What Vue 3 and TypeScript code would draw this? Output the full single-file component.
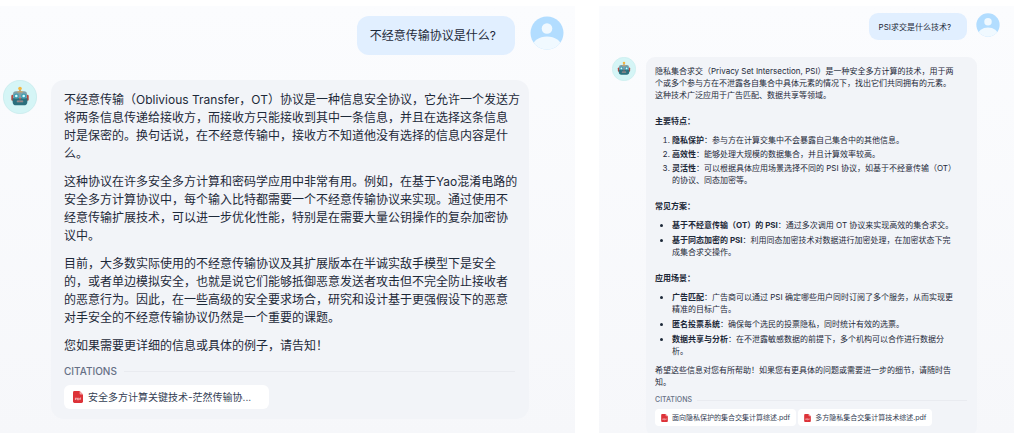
<script setup lang="ts">
interface Item {
  term: string
  text: string
}

interface Block {
  kind: 'p' | 'h' | 'ol' | 'ul'
  text?: string
  items?: Item[]
}

interface Chat {
  id: string
  size: 'regular' | 'compact'
  question: string
  blocks: Block[]
  citations: string[]
}

const chats: Chat[] = [
  {
    id: 'ot',
    size: 'regular',
    question: '不经意传输协议是什么?',
    blocks: [
      {
        kind: 'p',
        text: '不经意传输（Oblivious Transfer，OT）协议是一种信息安全协议，它允许一个发送方\n将两条信息传递给接收方，而接收方只能接收到其中一条信息，并且在选择这条信息\n时是保密的。换句话说，在不经意传输中，接收方不知道他没有选择的信息内容是什\n么。',
      },
      {
        kind: 'p',
        text: '这种协议在许多安全多方计算和密码学应用中非常有用。例如，在基于Yao混淆电路的\n安全多方计算协议中，每个输入比特都需要一个不经意传输协议来实现。通过使用不\n经意传输扩展技术，可以进一步优化性能，特别是在需要大量公钥操作的复杂加密协\n议中。',
      },
      {
        kind: 'p',
        text: '目前，大多数实际使用的不经意传输协议及其扩展版本在半诚实敌手模型下是安全\n的，或者单边模拟安全，也就是说它们能够抵御恶意发送者攻击但不完全防止接收者\n的恶意行为。因此，在一些高级的安全要求场合，研究和设计基于更强假设下的恶意\n对手安全的不经意传输协议仍然是一个重要的课题。',
      },
      { kind: 'p', text: '您如果需要更详细的信息或具体的例子，请告知！' },
    ],
    citations: ['安全多方计算关键技术-茫然传输协...'],
  },
  {
    id: 'psi',
    size: 'compact',
    question: 'PSI求交是什么技术?',
    blocks: [
      {
        kind: 'p',
        text: '隐私集合求交（Privacy Set Intersection, PSI）是一种安全多方计算的技术，用于两个或多个参与方在不泄露各自集合中具体元素的情况下，找出它们共同拥有的元素。这种技术广泛应用于广告匹配、数据共享等领域。',
      },
      { kind: 'h', text: '主要特点：' },
      {
        kind: 'ol',
        items: [
          { term: '隐私保护', text: '：参与方在计算交集中不会暴露自己集合中的其他信息。' },
          { term: '高效性', text: '：能够处理大规模的数据集合，并且计算效率较高。' },
          { term: '灵活性', text: '：可以根据具体应用场景选择不同的 PSI 协议，如基于不经意传输（OT）的协议、同态加密等。' },
        ],
      },
      { kind: 'h', text: '常见方案：' },
      {
        kind: 'ul',
        items: [
          { term: '基于不经意传输（OT）的 PSI', text: '：通过多次调用 OT 协议来实现高效的集合求交。' },
          { term: '基于同态加密的 PSI', text: '：利用同态加密技术对数据进行加密处理，在加密状态下完成集合求交操作。' },
        ],
      },
      { kind: 'h', text: '应用场景：' },
      {
        kind: 'ul',
        items: [
          { term: '广告匹配', text: '：广告商可以通过 PSI 确定哪些用户同时订阅了多个服务，从而实现更精准的目标广告。' },
          { term: '匿名投票系统', text: '：确保每个选民的投票隐私，同时统计有效的选票。' },
          { term: '数据共享与分析', text: '：在不泄露敏感数据的前提下，多个机构可以合作进行数据分析。' },
        ],
      },
      { kind: 'p', text: '希望这些信息对您有所帮助！如果您有更具体的问题或需要进一步的细节，请随时告知。' },
    ],
    citations: ['面向隐私保护的集合交集计算综述.pdf', '多方隐私集合交集计算技术综述.pdf'],
  },
]
</script>

<template>
  <main class="page">
    <section v-for="chat in chats" :key="chat.id" class="chat" :class="chat.size">
      <div class="question">
        <p class="ask">{{ chat.question }}</p>
        <svg class="avatar" viewBox="0 0 34 34" aria-hidden="true">
          <clipPath :id="'face-' + chat.id"><circle cx="17" cy="17" r="16.5" /></clipPath>
          <g :clip-path="'url(#face-' + chat.id + ')'">
            <rect width="34" height="34" fill="#b2ddff" />
            <circle cx="17" cy="12.500" r="5.300" fill="#f0f9ff" />
            <ellipse cx="17" cy="31" rx="14.500" ry="10.500" fill="#f0f9ff" />
          </g>
        </svg>
      </div>

      <div class="answer">
        <svg class="avatar" viewBox="0 0 34 34" aria-hidden="true">
          <circle cx="17" cy="17" r="16.600" fill="#d5f5f6" stroke="#c6ebec" stroke-width="0.800" />
          <rect x="16.200" y="8.500" width="1.600" height="4" fill="#8b9297" />
          <circle cx="17" cy="8.600" r="1.800" fill="#f3b63f" />
          <rect x="8.300" y="14.800" width="2.400" height="6" rx="1.200" fill="#b8483f" />
          <rect x="23.300" y="14.800" width="2.400" height="6" rx="1.200" fill="#b8483f" />
          <path d="M13 11.200h8c2 0 3 1.200 3 3v4.800H10v-4.800c0-1.800 1-3 3-3z" fill="#7f9fa8" />
          <path d="M9.600 18.200h14.800v3.200c0 2.600-1.300 3.900-3.700 3.900h-7.400c-2.400 0-3.700-1.300-3.700-3.900z" fill="#2b6f7d" />
          <path d="M14.500 11.200h5v1.200h-5z" fill="#d9a55a" />
          <circle cx="13.300" cy="16" r="2.600" fill="#3d9fb3" />
          <circle cx="20.700" cy="16" r="2.600" fill="#3d9fb3" />
          <circle cx="13.300" cy="16" r="1.300" fill="#d9fbff" />
          <circle cx="20.700" cy="16" r="1.300" fill="#d9fbff" />
          <path d="M17 17.200l1.200 2h-2.400z" fill="#d9544c" />
          <rect x="13.800" y="20.600" width="6.400" height="1.600" rx="0.500" fill="#94a5a9" />
          <path d="M15 20.600v1.600M16.400 20.600v1.600M17.800 20.600v1.600M19.200 20.600v1.600" stroke="#a4504d" stroke-width="0.600" />
        </svg>

        <article class="reply">
          <div class="text">
            <template v-for="(block, i) in chat.blocks" :key="i">
              <p v-if="block.kind === 'p'">{{ block.text }}</p>
              <h3 v-else-if="block.kind === 'h'">{{ block.text }}</h3>
              <component :is="block.kind" v-else>
                <li v-for="item in block.items" :key="item.term"><strong>{{ item.term }}</strong>{{ item.text }}</li>
              </component>
            </template>
          </div>

          <div class="divider">
            <h4>CITATIONS</h4>
            <span class="rule"></span>
          </div>
          <div class="files">
            <a v-for="file in chat.citations" :key="file" class="file" href="#">
              <svg class="pdf" viewBox="0 0 10 12" aria-hidden="true">
                <path d="M1.400 0H6.600L10 3.400V10.600Q10 12 8.600 12H1.400Q0 12 0 10.600V1.400Q0 0 1.400 0z" fill="#dd3238" />
                <path d="M6.600 0L10 3.400H7.600Q6.600 3.400 6.600 2.400z" fill="#f3a3a5" />
                <path d="M2.400 9V7h.8q.6 0 .6.600t-.6.600h-.8M4.600 7v2h.5q.8 0 .8-1t-.8-1zM6.900 9V7h1.200M6.900 8h1" fill="none" stroke="#fff" stroke-width="0.500" />
              </svg>
              <span>{{ file }}</span>
            </a>
          </div>
        </article>
      </div>
    </section>
  </main>
</template>

<style>
body {
  margin: 0;
  background: #fff;
}
</style>

<style scoped>
.page {
  box-sizing: border-box;
  height: 100vh;
  padding-top: 6px;
  display: grid;
  grid-template-columns: 575fr 415fr;
  gap: 24px;
  overflow: hidden;
  color: #1d2939;
  font-family: Inter, "Noto Sans CJK SC", sans-serif;
}

p,
h3,
h4,
ol,
ul {
  margin: 0;
}

.chat {
  min-width: 0;
  background: linear-gradient(#fbfcfe, #f6f7fa);
}

.question,
.answer {
  display: flex;
  align-items: flex-start;
}

.question {
  justify-content: flex-end;
}

.ask {
  background: #e1efff;
}

.avatar {
  flex: none;
  display: block;
}

.reply {
  flex: 1;
  min-width: 0;
  background: #f2f4f8;
}

.text {
  white-space: pre-line;
}

.text h3 {
  font-size: inherit;
  font-weight: 700;
}

strong {
  font-weight: 700;
}

.divider {
  display: flex;
  align-items: center;
}

.divider h4 {
  color: #667085;
  font-weight: 500;
}

.rule {
  flex: 1;
  height: 1px;
  background: #e9ebf0;
}

.files {
  display: flex;
}

.file {
  display: flex;
  align-items: center;
  background: #fff;
  color: #344054;
  text-decoration: none;
  white-space: nowrap;
}

/* Regular size */
.regular {
  font-size: 12px;
  line-height: 18px;
}

.regular .question {
  padding: 10px 11px 0 0;
  gap: 15px;
}

.regular .ask {
  padding: 11px 19px 10px 13px;
  border-radius: 12px;
}

.regular .avatar {
  width: 34px;
  height: 34px;
}

.regular .answer {
  margin-top: 25px;
  padding: 0 46px 0 3px;
  gap: 14px;
}

.regular .reply {
  padding: 11px 7px 10px 13px;
  border-radius: 13px;
}

.regular p + p {
  margin-top: 10px;
}

.regular .divider {
  margin: 8px 7px 0 0;
  gap: 7px;
}

.regular h4 {
  font-size: 10px;
  line-height: 16px;
}

.regular .files {
  margin-top: 6px;
}

.regular .file {
  height: 24px;
  padding: 0 18px 0 9px;
  gap: 5px;
  border-radius: 6px;
  font-size: 10px;
}

.regular .pdf {
  width: 10px;
  height: 12px;
}

/* Compact size */
.compact {
  font-size: 8px;
  line-height: 12px;
}

.compact .question {
  padding: 7px 14px 0 0;
  gap: 9px;
}

.compact .ask {
  padding: 8px 16px 7px 10px;
  border-radius: 9px;
}

.compact .avatar {
  width: 24px;
  height: 24px;
}

.compact .answer {
  margin-top: 17px;
  padding: 0 37px 0 13px;
  gap: 10px;
}

.compact .reply {
  padding: 8px 10px 10px 9px;
  border-radius: 9px;
}

.compact .text {
  padding-right: 10px;
}

.compact h3 {
  margin: 14px 0 7px;
}

.compact ol,
.compact ul {
  padding-left: 17px;
}

.compact ol li + li {
  margin-top: 2px;
}

.compact ul li + li {
  margin-top: 3px;
}

.compact ul + p {
  margin-top: 7px;
}

.compact .divider {
  margin-top: 6px;
  gap: 5px;
}

.compact h4 {
  font-size: 7px;
  line-height: 12px;
}

.compact .files {
  margin-top: 3px;
  gap: 2px;
}

.compact .file {
  height: 17px;
  padding: 0 6px;
  gap: 4px;
  border-radius: 4px;
  font-size: 7px;
}

.compact .pdf {
  width: 7px;
  height: 8px;
}
</style>
